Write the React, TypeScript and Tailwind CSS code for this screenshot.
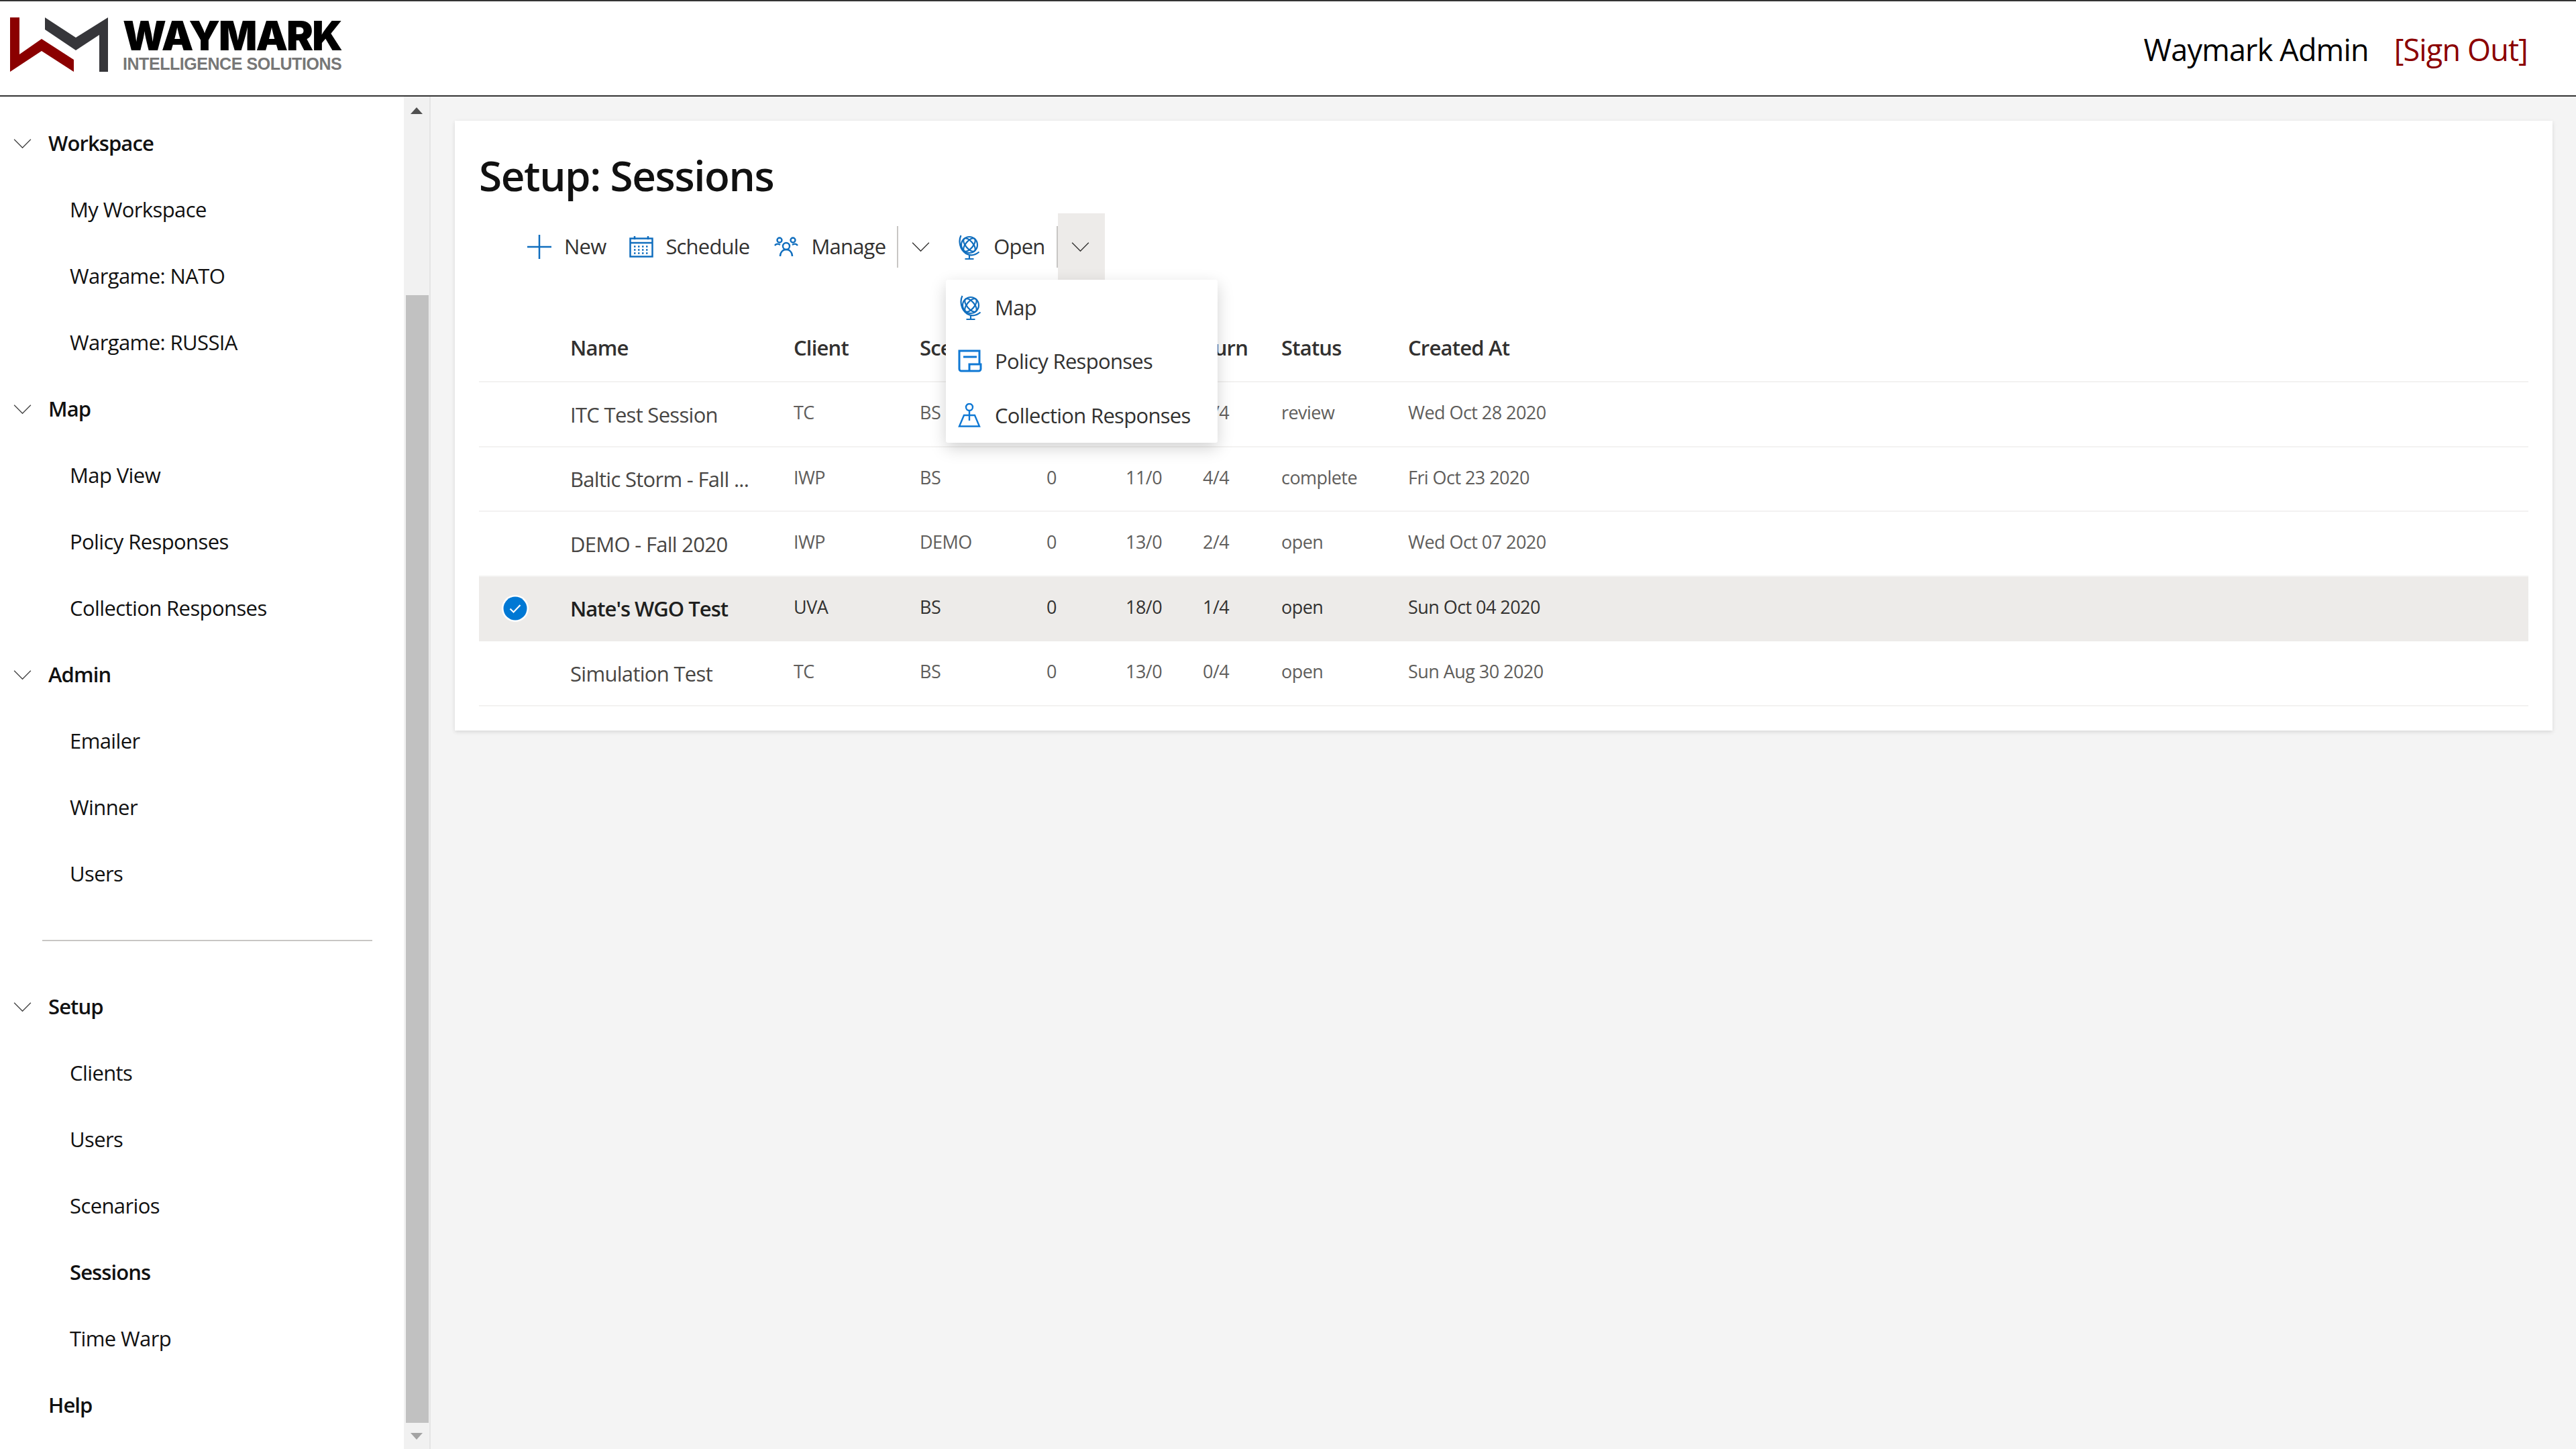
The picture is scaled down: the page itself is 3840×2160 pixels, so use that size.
const navGroups = [
  { label: "Workspace", items: ["My Workspace", "Wargame: NATO", "Wargame: RUSSIA"] },
  { label: "Map", items: ["Map View", "Policy Responses", "Collection Responses"] },
  { label: "Admin", items: ["Emailer", "Winner", "Users"] },
];

const setupItems = ["Clients", "Users", "Scenarios", "Sessions", "Time Warp"];

const rows = [
  { name: "ITC Test Session", client: "TC", scenario: "BS", a: "", b: "", turn: "4/4", status: "review", created: "Wed Oct 28 2020" },
  { name: "Baltic Storm - Fall ...", client: "IWP", scenario: "BS", a: "0", b: "11/0", turn: "4/4", status: "complete", created: "Fri Oct 23 2020" },
  { name: "DEMO - Fall 2020", client: "IWP", scenario: "DEMO", a: "0", b: "13/0", turn: "2/4", status: "open", created: "Wed Oct 07 2020" },
  { name: "Nate's WGO Test", client: "UVA", scenario: "BS", a: "0", b: "18/0", turn: "1/4", status: "open", created: "Sun Oct 04 2020", selected: true },
  { name: "Simulation Test", client: "TC", scenario: "BS", a: "0", b: "13/0", turn: "0/4", status: "open", created: "Sun Aug 30 2020" },
];

function Chevron({ className }: { className: string }) {
  return (
    <svg viewBox="0 0 24 14" className={className} fill="none" stroke="currentColor" strokeWidth="1.2">
      <path d="M1 1.5 12 12.5 23 1.5" />
    </svg>
  );
}

function GlobeIcon() {
  return (
    <svg viewBox="0 0 32 38" className="h-[38px] w-[32px] text-[#106ebe]" fill="none" stroke="currentColor" strokeWidth="2.2">
      <circle cx="17" cy="16" r="12" />
      <ellipse cx="17" cy="16" rx="5.5" ry="12" transform="rotate(-40 17 16)" />
      <ellipse cx="17" cy="16" rx="5.5" ry="12" transform="rotate(40 17 16)" />
      <path d="M4.500 2C.5 10 2.500 23 12 29c7 4 14 2 19.500-2.500M17 31v6M10.500 37h13" />
    </svg>
  );
}

function LogoMark() {
  return (
    <svg viewBox="0 0 150 84" className="h-[84px] w-[150px] shrink-0">
      <path fill="#8b0000" d="M0 0h14v55l33-23 48 31v18L47 50 0 81z" />
      <path fill="#36363a" d="M52 0 98 30l48-30v81h-13V26L98 49 52 18z" />
    </svg>
  );
}

function Nav() {
  return (
    <nav className="flex-1 pt-5 text-[31px] tracking-[-0.6px] text-[#111]">
      {navGroups.map((g) => (
        <div key={g.label}>
          <div className="flex h-[99px] items-center font-semibold tracking-[-0.9px]">
            <Chevron className="ml-5 mr-[25px] h-[16px] w-[27px] text-[#444]" />
            {g.label}
          </div>
          {g.items.map((i) => (
            <div key={i} className="flex h-[99px] items-center pl-[104px]">{i}</div>
          ))}
        </div>
      ))}
      <div className="flex h-[99px] items-center pl-[63px] pr-[47px]">
        <div className="h-[2px] w-full bg-[#c8c6c4]" />
      </div>
      <div className="flex h-[99px] items-center font-semibold tracking-[-0.9px]">
        <Chevron className="ml-5 mr-[25px] h-[16px] w-[27px] text-[#444]" />
        Setup
      </div>
      {setupItems.map((i) => (
        <div key={i} className={`flex h-[99px] items-center pl-[104px] ${i === "Sessions" ? "font-semibold tracking-[-0.9px]" : ""}`}>{i}</div>
      ))}
      <div className="flex h-[99px] items-center pl-[72px] font-semibold tracking-[-0.9px]">Help</div>
    </nav>
  );
}

function Scrollbar() {
  return (
    <div className="flex w-[38px] shrink-0 flex-col items-center bg-[#f1f1f1]">
      <div className="flex h-[296px] w-full items-start justify-center pt-4">
        <svg viewBox="0 0 18 10" className="h-[10px] w-[18px]"><path fill="#505050" d="M9 0 18 10H0z" /></svg>
      </div>
      <div className="ml-[2px] h-[1681px] w-[34px] bg-[#c1c1c1]" />
      <div className="flex flex-1 items-center justify-center">
        <svg viewBox="0 0 18 10" className="h-[10px] w-[18px]"><path fill="#a3a3a3" d="M0 0H18L9 10z" /></svg>
      </div>
    </div>
  );
}

function CommandBar() {
  return (
    <div className="flex h-[99px] items-center pl-[72px] text-[31px] tracking-[-0.8px] text-[#323130]">
      <svg viewBox="0 0 36 36" className="h-9 w-9 text-[#106ebe]" fill="none" stroke="currentColor" strokeWidth="2.500">
        <path d="M18 0v36M0 18h36" />
      </svg>
      <span className="ml-[19px]">New</span>
      <svg viewBox="0 0 36 32" className="ml-[35px] h-8 w-9 text-[#106ebe]" fill="none" stroke="currentColor" strokeWidth="2.500">
        <path d="M1.500 3.500h33v27h-33zM1.500 10h33M8 0v5M28 0v5" />
        <path strokeDasharray="2.500 3.500" strokeWidth="2.500" d="M7 15.500h23M7 20.500h23M7 25.500h23" />
      </svg>
      <span className="ml-[18px]">Schedule</span>
      <svg viewBox="0 0 36 30" className="ml-[37px] h-[30px] w-9 text-[#106ebe]" fill="none" stroke="currentColor" strokeWidth="2.400">
        <circle cx="8" cy="5" r="3.500" />
        <circle cx="28" cy="5" r="3.500" />
        <circle cx="18" cy="14" r="5" />
        <path d="M1 13c2-3 5-3 8-1M35 13c-2-3-5-3-8-1M9 29c0-6 4-10 9-10s9 4 9 10" />
      </svg>
      <span className="ml-[19px]">Manage</span>
      <div className="ml-[17px] h-[62px] w-[2px] bg-[#c8c6c4]" />
      <Chevron className="ml-[20px] h-[16px] w-[27px] text-[#323130]" />
      <span className="ml-[42px]"><GlobeIcon /></span>
      <span className="ml-[21px]">Open</span>
      <div className="ml-[17px] h-[62px] w-[2px] bg-[#c8c6c4]" />
      <div className="flex h-full w-[70px] items-center justify-center bg-[#edebe9]">
        <Chevron className="mr-[2px] h-[16px] w-[27px] text-[#323130]" />
      </div>
    </div>
  );
}

function OpenMenu() {
  return (
    <div className="absolute left-[732px] top-[237px] z-10 flex h-[243px] w-[405px] flex-col rounded-[3px] bg-white py-[1px] text-[31px] tracking-[-0.7px] text-[#323130] shadow-[0_8px_24px_rgba(0,0,0,0.18)]">
      <div className="flex h-[81px] items-center pl-5">
        <GlobeIcon />
        <span className="ml-[21px]">Map</span>
      </div>
      <div className="flex h-[81px] items-center pl-[18px]">
        <svg viewBox="0 0 36 34" className="h-[34px] w-[36px] text-[#0f78d4]" fill="none" stroke="currentColor" strokeWidth="3">
          <path d="M32 21V2H2v27a3 3 0 0 0 3 3h26a3 3 0 0 0 3-3v-7H17v10M8 11h20" />
        </svg>
        <span className="ml-[19px]">Policy Responses</span>
      </div>
      <div className="flex h-[81px] items-center pl-[18px]">
        <svg viewBox="0 0 34 36" className="h-[36px] w-[34px] text-[#0f78d4]" fill="none" stroke="currentColor" strokeWidth="2.400">
          <circle cx="17" cy="6" r="5" />
          <path d="M17 11v15M9 18h16L32 34.500H2z" />
        </svg>
        <span className="ml-[21px]">Collection Responses</span>
      </div>
    </div>
  );
}

function SessionsTable() {
  const grid = "grid grid-cols-[136px_333px_188px_189px_118px_115px_117px_189px_1fr] items-center";
  return (
    <div>
      <div className={`${grid} mt-[54px] h-[99px] border-b-2 border-[#f3f2f1] pb-[2px] text-[31px] font-semibold tracking-[-0.8px] text-[#323130]`}>
        <div />
        <div>Name</div>
        <div>Client</div>
        <div>Scenario</div>
        <div />
        <div />
        <div>Turn</div>
        <div>Status</div>
        <div>Created At</div>
      </div>
      {rows.map((r) => (
        <div
          key={r.name}
          className={`${grid} h-[96.6px] border-b-2 border-[#f3f2f1] text-[27px] tracking-[-0.55px] text-[#605e5c] ${r.selected ? "border-transparent bg-[#edebe9] text-[#323130]" : ""}`}
        >
          <div className="flex justify-center pl-[4px] pr-[32px]">
            {r.selected && (
              <svg viewBox="0 0 40 40" className="h-10 w-10">
                <circle cx="20" cy="20" r="20" fill="#fff" />
                <circle cx="20" cy="20" r="17.500" fill="#0078d4" />
                <path d="M12.500 20.500 17.500 25.500 27.500 15" fill="none" stroke="#fff" strokeWidth="2.200" />
              </svg>
            )}
          </div>
          <div className={`pt-[1px] text-[31px] tracking-[-0.7px] ${r.selected ? "font-semibold tracking-[-1px] text-[#201f1e]" : "text-[#484644]"}`}>{r.name}</div>
          <div className="pb-[4px]">{r.client}</div>
          <div className="pb-[4px]">{r.scenario}</div>
          <div className="pb-[4px]">{r.a}</div>
          <div className="pb-[4px]">{r.b}</div>
          <div className="pb-[4px]">{r.turn}</div>
          <div className="pb-[4px]">{r.status}</div>
          <div className="pb-[4px]">{r.created}</div>
        </div>
      ))}
    </div>
  );
}

export default function App() {
  return (
    <div className="flex h-[2160px] w-[3840px] flex-col overflow-hidden bg-white font-['Open_Sans',sans-serif]">
      <header className="flex h-[144px] shrink-0 items-center justify-between border-y-2 border-[#333] pl-[15px] pr-[72px]">
        <div className="flex items-center pb-[8px]">
          <LogoMark />
          <div className="ml-[18px] flex flex-col">
            <span className="font-['Inter',sans-serif] text-[60px] font-black leading-[52px] tracking-[-2px] text-black">WAYMARK</span>
            <span className="mt-[2px] font-['Liberation_Sans',sans-serif] text-[25px] font-bold leading-[28px] tracking-[-0.45px] text-[#777]">INTELLIGENCE SOLUTIONS</span>
          </div>
        </div>
        <div className="flex items-center pt-[3px] text-[45px] tracking-[-0.85px]">
          <span className="font-medium text-black">Waymark Admin</span>
          <span className="ml-[38px] text-[#8b0000]">[Sign Out]</span>
        </div>
      </header>
      <div className="flex min-h-0 flex-1">
        <aside className="flex w-[642px] shrink-0 border-r-2 border-[#e4e4e4]">
          <Nav />
          <Scrollbar />
        </aside>
        <main className="min-w-0 flex-1 bg-[#f4f4f4] pl-9 pr-[35px] pt-9">
          <section className="relative bg-white px-9 pb-9 shadow-[0_2px_6px_rgba(0,0,0,0.12)]">
            <h1 className="flex h-[138px] items-center pt-[24px] text-[62px] font-semibold tracking-[-1.4px] text-[#111]">Setup: Sessions</h1>
            <CommandBar />
            <OpenMenu />
            <SessionsTable />
          </section>
        </main>
      </div>
    </div>
  );
}
